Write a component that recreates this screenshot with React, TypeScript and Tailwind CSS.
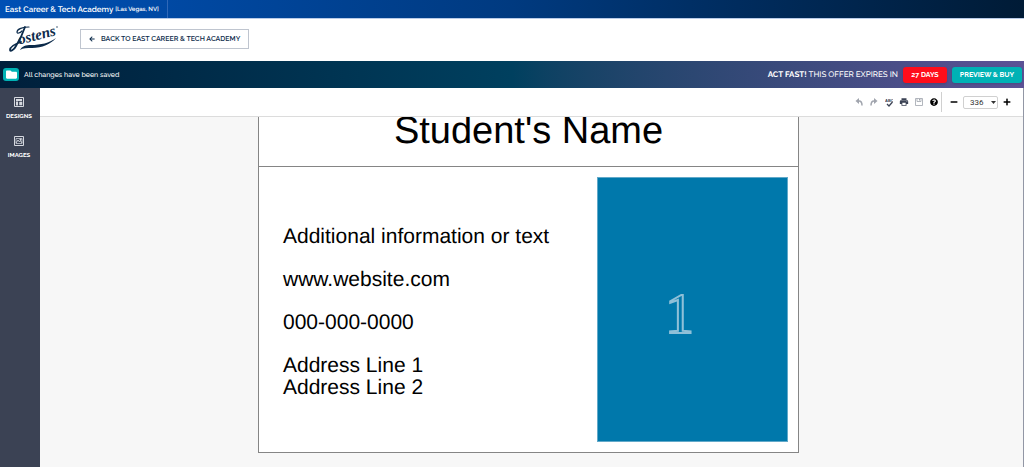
import React from "react";
import { FaArrowLeft, FaFolder, FaMinus, FaPlus, FaQuestionCircle } from "react-icons/fa";
import { MdPrint } from "react-icons/md";

const JostensLogo: React.FC = () => (
  <svg viewBox="0 0 50 30" className="w-[50px] h-[30px] overflow-visible text-[#0b2a4a]" aria-label="Jostens">
    <g transform="rotate(-14 11 19)" fill="currentColor" fontFamily="'Liberation Serif', serif" fontStyle="italic">
      <text x="9" y="20" fontSize="15" fontWeight="700">ostens</text>
    </g>
    <g fill="none" stroke="currentColor" strokeLinecap="round">
      <path d="M19 3C13 3 7 5 7 8c0 2 3 1 5-1" strokeWidth="1.2" />
      <path d="M15 3C13 9 9 17 6 22c-2 4-6 6-6 4 0-3 5-6 11-8" strokeWidth="1.8" />
    </g>
    <path d="M10 26c2-4 6-5 11-5 10 0 18-2 25-7-5 6-14 10-24 10-5 0-9 0-12 2z" fill="currentColor" />
    <circle cx="47" cy="3" r="0.7" fill="currentColor" />
  </svg>
);

const UndoIcon = () => (
  <svg viewBox="0 0 16 16" className="w-2 h-2" fill="none" stroke="currentColor" strokeWidth="3">
    <path d="M4 6h4c4 0 6 2 6 9" />
    <path d="M8 0v12L1 6z" fill="currentColor" stroke="none" />
  </svg>
);

const RedoIcon = () => (
  <svg viewBox="0 0 16 16" className="w-2 h-2" fill="none" stroke="currentColor" strokeWidth="3">
    <path d="M12 6H8C4 6 2 8 2 15" />
    <path d="M8 0v12l7-6z" fill="currentColor" stroke="none" />
  </svg>
);

const SpellIcon = () => (
  <svg viewBox="0 0 16 18" className="w-2 h-[9px]">
    <text x="0" y="7" fontSize="8" fontWeight="700" fontFamily="'Liberation Sans', sans-serif" fill="currentColor">
      ABC
    </text>
    <path d="M4 12l4 4 7-8" fill="none" stroke="currentColor" strokeWidth="2.5" />
  </svg>
);

const SaveIcon = () => (
  <svg viewBox="0 0 16 16" className="w-2 h-2" fill="none" stroke="currentColor" strokeWidth="1.6">
    <path d="M1 1h14v14H1z" />
    <path d="M4 1v6h8V1" />
    <path d="M9 2v3" strokeWidth="2" />
  </svg>
);

const DesignsIcon = () => (
  <svg viewBox="0 0 20 20" className="w-[10px] h-[10px]" fill="none" stroke="currentColor">
    <path d="M1 1h18v18H1z" strokeWidth="2" />
    <path d="M4 6h12" strokeWidth="4" />
    <path d="M6 9v8" strokeWidth="4" />
    <path d="M11 10h5v6h-5z" fill="currentColor" />
  </svg>
);

const ImagesIcon = () => (
  <svg viewBox="0 0 20 20" className="w-[10px] h-[10px]" fill="none" stroke="currentColor">
    <path d="M1 1h18v18H1z" strokeWidth="2" />
    <path d="M4 5h12v10H4z" strokeWidth="1.4" />
    <path d="M4 14l4-6 3 4 2-3 3 5" strokeWidth="1.8" />
    <circle cx="13" cy="7" r="1.5" fill="currentColor" />
  </svg>
);

const tabs = [
  { label: "DESIGNS", icon: <DesignsIcon /> },
  { label: "IMAGES", icon: <ImagesIcon /> },
];

const App: React.FC = () => {
  return (
    <div className="h-screen flex flex-col overflow-hidden bg-white font-[Raleway,Lato,sans-serif] [text-rendering:geometricPrecision]">
      <div className="h-[18px] shrink-0 flex bg-linear-to-r from-[#0050b5] via-[#003a80] to-[#001b36]">
        <a href="#school" className="flex items-center gap-[2px] px-[5px] pr-2 border-r border-[#2f68b8] text-white font-semibold">
          <span className="text-[8px]">East Career &amp; Tech Academy</span>
          <span className="text-[6px]">[Las Vegas, NV]</span>
        </a>
      </div>

      <header className="h-[43px] shrink-0 flex items-center gap-5 px-[10px] pb-[2px] border-t border-[#b8cbe8]">
        <a href="#home">
          <JostensLogo />
        </a>
        <a
          href="#back"
          className="h-5 px-2 flex items-center gap-[6px] border border-[#bfc5cf] text-[7px] font-semibold text-[#0b2a4a]"
        >
          <FaArrowLeft size={6} />
          BACK TO EAST CAREER &amp; TECH ACADEMY
        </a>
      </header>

      <div className="h-[27px] shrink-0 flex items-center justify-between pl-[3px] pr-[2px] text-white bg-linear-to-r from-[#001f3b] via-[#00405f] to-[#5c5296]">
        <div className="flex items-center gap-[5px] text-[7px] leading-[9px] font-medium">
          <button aria-label="Projects" className="w-4 h-[13px] rounded-[3px] bg-[#00b2b5] flex items-center justify-center">
            <FaFolder size={11} />
          </button>
          <span>All changes have been saved</span>
        </div>
        <div className="flex items-center gap-[5px]">
          <p className="text-[8px] leading-[9px] pb-px font-medium">
            <strong>ACT FAST!</strong> THIS OFFER EXPIRES IN
          </p>
          <span className="w-11 h-4 rounded-[3px] bg-[#ff0d1b] shadow flex items-center justify-center text-[7px] leading-[9px] font-bold">
            27 DAYS
          </span>
          <button className="w-[70px] h-4 rounded-[3px] bg-[#00b2b5] shadow flex items-center justify-center text-[7px] leading-[9px] font-bold">
            PREVIEW &amp; BUY
          </button>
        </div>
      </div>

      <div className="flex flex-1 min-h-0">
        <nav className="w-10 shrink-0 pt-[9px] pr-[2px] flex flex-col items-center gap-4 bg-[#3b4254] text-white">
          {tabs.map((tab) => (
            <button key={tab.label} className="flex flex-col items-center gap-1 text-[6px] leading-[9px] font-bold">
              <span className="text-[#d5d8df]">{tab.icon}</span>
              {tab.label}
            </button>
          ))}
        </nav>

        <main className="flex-1 min-w-0 flex flex-col border-r border-[#9297a5]">
          <div className="h-[29px] shrink-0 flex items-center justify-end gap-[7px] pr-3 border-b border-[#dcdcdc] text-[#3b4254]">
            <button aria-label="Undo" className="text-[#a0a4ad]"><UndoIcon /></button>
            <button aria-label="Redo" className="text-[#a0a4ad]"><RedoIcon /></button>
            <button aria-label="Check spelling"><SpellIcon /></button>
            <button aria-label="Print" className="-mx-px"><MdPrint size={10} /></button>
            <button aria-label="Save" className="text-[#a0a4ad]"><SaveIcon /></button>
            <button aria-label="Help" className="text-black"><FaQuestionCircle size={8} /></button>
            <div className="flex items-center gap-[5px] pl-2 h-5 -ml-1 border-l border-[#d0d0d0] text-black">
              <button aria-label="Zoom out"><FaMinus size={8} /></button>
              <div className="relative flex">
                <select
                  aria-label="Zoom"
                  defaultValue="336"
                  className="appearance-none w-[35px] h-[13px] pl-[6px] border border-[#d0d0d0] rounded-[2px] bg-white font-[Roboto,sans-serif] text-[8px] leading-[11px] text-[#333]"
                >
                  <option>336</option>
                </select>
                <svg viewBox="0 0 10 6" className="absolute right-[2px] top-[5px] w-[5px] h-[3px] pointer-events-none">
                  <path d="M0 0h10L5 6z" fill="#333" />
                </svg>
              </div>
              <button aria-label="Zoom in"><FaPlus size={8} /></button>
            </div>
          </div>

          <div className="flex-1 min-h-0 overflow-hidden flex justify-center items-start pr-[6px] bg-[#f7f7f7] font-['Liberation_Sans',Arial,sans-serif] text-black">
            <div className="w-[541px] border border-t-0 border-[#858585] bg-white">
              <div className="h-[50px] pb-4 flex items-end justify-center border-b border-[#858585]">
                <h1 className="text-[38px] leading-[38px]">Student's Name</h1>
              </div>
              <div className="flex justify-between p-[10px] pl-6">
                <div className="pt-[49px] flex flex-col gap-[21px] text-[21px] leading-[22px]">
                  <p>Additional information or text</p>
                  <p>www.website.com</p>
                  <p>000-000-0000</p>
                  <p>
                    Address Line 1
                    <br />
                    Address Line 2
                  </p>
                </div>
                <button className="w-[191px] h-[265px] pr-[26px] pt-2 flex items-center justify-center bg-[#0078ab] border border-[#62a9c9] font-['Liberation_Serif',serif] text-[58px] text-transparent [-webkit-text-stroke:2px_#8fc0d8]">
                  1
                </button>
              </div>
            </div>
          </div>
        </main>
      </div>
    </div>
  );
};

export default App;
